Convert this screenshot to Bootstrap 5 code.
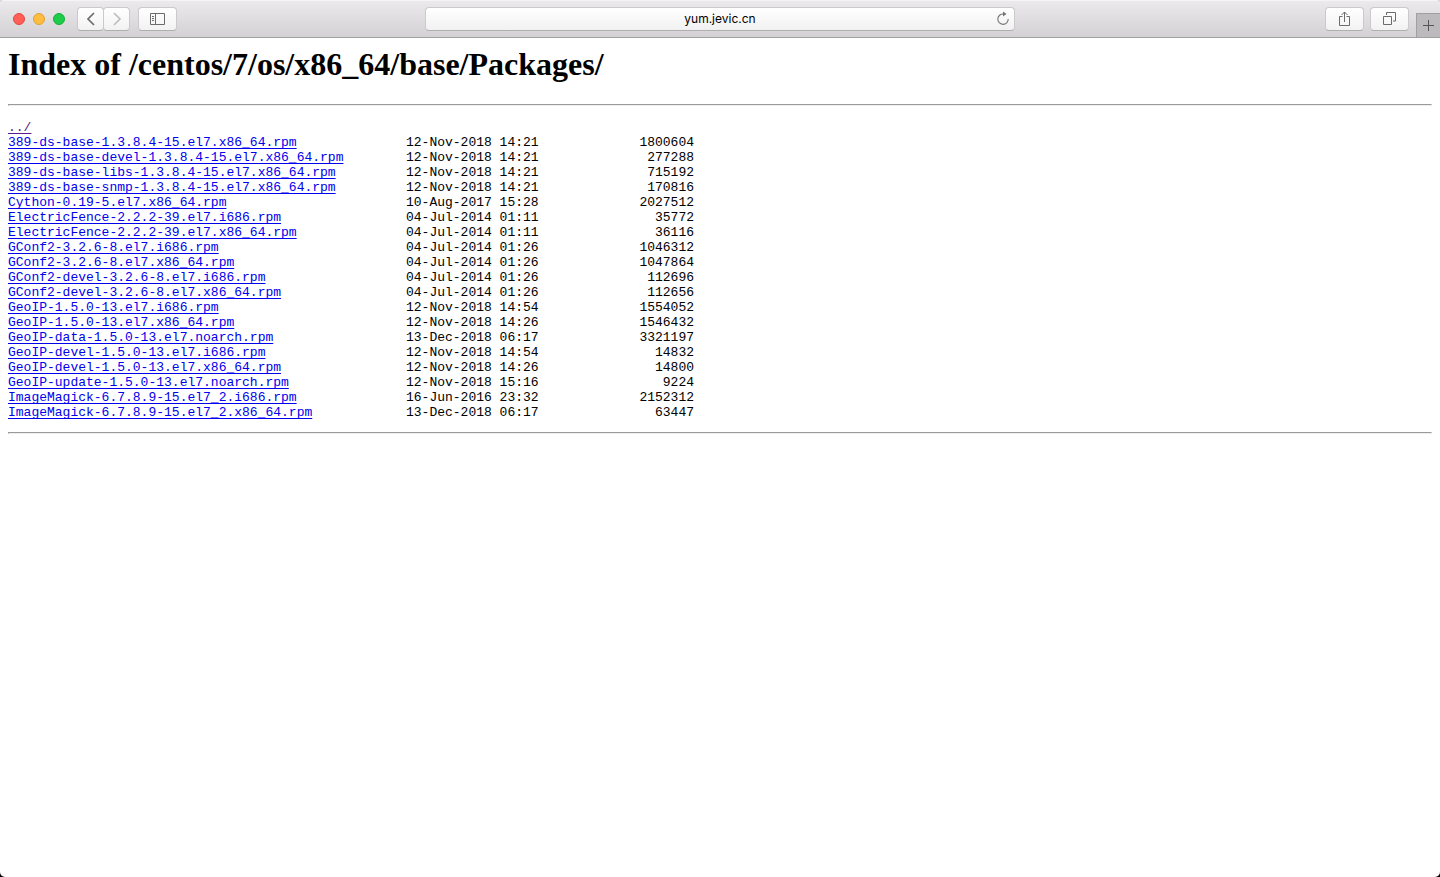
<!DOCTYPE html>
<html lang="en">
<head>
<meta charset="utf-8">
<meta name="viewport" content="width=device-width, initial-scale=1">
<title>Index of /centos/7/os/x86_64/base/Packages/</title>
<link href="https://cdn.jsdelivr.net/npm/bootstrap@5.3.0/dist/css/bootstrap.min.css" rel="stylesheet">
<style>
  body { background: linear-gradient(#d9dcd9 50%, #000 50%); color: #000; }
  .browser { background: #fff; border-radius: 5px; overflow: hidden; }
  .toolbar { height: 38px; background: linear-gradient(#eceaec, #d3d1d3); border-bottom: 1px solid #a1a0a1; box-shadow: inset 0 1px #f6f5f6; }
  .toolbar-side { flex: 1 1 0; }
  .lights { padding: 0 12px 0 13px; }
  .light { width: 12px; height: 12px; border: 1px solid; border-radius: 50%; padding: 0; }
  .light-close { background: #ff5f57; border-color: #e2463f; }
  .light-min { background: #ffbd3f; border-color: #dfa033; }
  .light-zoom { background: #1fcb4b; border-color: #17ac35; }
  .tool { --bs-btn-padding-x: 0; --bs-btn-padding-y: 0; height: 24px; border: 1px solid #cbc9cb; border-bottom-color: #b0aeb0; border-radius: 4px; background: linear-gradient(#fff, #f2f2f2); color: #6b6b6b; display: flex; align-items: center; justify-content: center; }
  .tool-nav { width: 27px; }
  .tool-nav + .tool-nav { margin-left: -1px; color: #bdbdbd; }
  .tool-wide { width: 39px; }
  .tool-group { gap: 6px; margin-right: 7px; }
  .address { width: 590px; }
  .address input { height: 24px; padding: 0 24px; border: 1px solid #cbc9cb; border-bottom-color: #b0aeb0; border-radius: 4px; background: linear-gradient(#fff, #f1f1f1); color: #000; font: 12px/22px Inter, sans-serif; }
  .reload { right: 4px; top: 4px; width: 16px; height: 16px; color: #747474; }
  .new-tab { width: 24px; height: 24px; background: #bcbabc; border: solid #a1a0a1; border-width: 1px 0 0 1px; color: #555; }
  svg { display: block; fill: none; stroke: currentColor; }
  .listing-title { font: bold 32px/36px "Liberation Serif", serif; }
  .rule { height: 2px; margin: 22px 0 14px; border: 1px solid; border-color: #9a9a9a #eee #eee #9a9a9a; opacity: 1; }
  .rule-end { margin-top: 12px; }
  .listing { width: 686px; table-layout: fixed; font: 13px/15px "Liberation Mono", monospace; }
  .listing td { padding: 0; white-space: nowrap; }
  .col-name { width: 398px; }
  .col-date { width: 132px; }
  .listing a { color: #0000ee; text-decoration-skip-ink: none; text-underline-offset: 2px; }
  .listing a.visited { color: #551a8b; }
</style>
</head>
<body>
<div class="browser min-vh-100">
  <header class="toolbar d-flex align-items-center">
    <div class="toolbar-side d-flex align-items-center">
      <div class="lights d-flex gap-2">
        <button class="light light-close" aria-label="Close"></button>
        <button class="light light-min" aria-label="Minimize"></button>
        <button class="light light-zoom" aria-label="Zoom"></button>
      </div>
      <div class="d-flex me-2">
        <button class="btn tool tool-nav" aria-label="Back"><svg width="10" height="14" stroke-width="1.7"><path d="M8 1 2 7l6 6"/></svg></button>
        <button class="btn tool tool-nav" aria-label="Forward"><svg width="10" height="14" stroke-width="1.7"><path d="m2 1 6 6-6 6"/></svg></button>
      </div>
      <button class="btn tool tool-wide" aria-label="Show sidebar"><svg width="15" height="12"><path d="M.5.5h14v11H.5zM5.500.5v11M2 3.500h2M2 5.500h2M2 7.500h2"/></svg></button>
    </div>
    <div class="address position-relative">
      <input class="form-control text-center" type="text" value="yum.jevic.cn" aria-label="Address">
      <button class="reload btn p-0 border-0 position-absolute" aria-label="Reload"><svg width="16" height="16" viewBox="0 0 16 16" stroke-width="1.1"><path d="M8.500 3A5.200 5.200 0 1 0 13.200 8"/><path d="M8 .5v5L11.500 3z" fill="currentColor" stroke="none"/></svg></button>
    </div>
    <div class="toolbar-side d-flex align-items-center justify-content-end align-self-stretch">
      <div class="tool-group d-flex">
        <button class="btn tool tool-wide" aria-label="Share"><svg width="13" height="16"><path d="M4.500 5.500h-3v9h10v-9h-3M6.500 11V1M3.500 4l3-3 3 3"/></svg></button>
        <button class="btn tool tool-wide" aria-label="Show all tabs"><svg width="13" height="13"><path d="M.5 4.500h8v8h-8zM3.500 3V.500h9v8.500h-2.500"/></svg></button>
      </div>
      <button class="new-tab p-0 d-flex align-items-center justify-content-center align-self-end" aria-label="New tab"><svg width="11" height="11"><path d="M5.500 0v11M0 5.500h11"/></svg></button>
    </div>
  </header>
  <main class="px-2 pt-2">
    <h1 class="listing-title mb-0">Index of /centos/7/os/x86_64/base/Packages/</h1>
    <hr class="rule">
    <table class="listing">
      <colgroup><col class="col-name"><col class="col-date"><col></colgroup>
      <tbody>
        <tr><td><a class="visited" href="#">../</a></td><td></td><td></td></tr>
        <tr><td><a href="#">389-ds-base-1.3.8.4-15.el7.x86_64.rpm</a></td><td>12-Nov-2018 14:21</td><td class="text-end">1800604</td></tr>
        <tr><td><a href="#">389-ds-base-devel-1.3.8.4-15.el7.x86_64.rpm</a></td><td>12-Nov-2018 14:21</td><td class="text-end">277288</td></tr>
        <tr><td><a href="#">389-ds-base-libs-1.3.8.4-15.el7.x86_64.rpm</a></td><td>12-Nov-2018 14:21</td><td class="text-end">715192</td></tr>
        <tr><td><a href="#">389-ds-base-snmp-1.3.8.4-15.el7.x86_64.rpm</a></td><td>12-Nov-2018 14:21</td><td class="text-end">170816</td></tr>
        <tr><td><a href="#">Cython-0.19-5.el7.x86_64.rpm</a></td><td>10-Aug-2017 15:28</td><td class="text-end">2027512</td></tr>
        <tr><td><a href="#">ElectricFence-2.2.2-39.el7.i686.rpm</a></td><td>04-Jul-2014 01:11</td><td class="text-end">35772</td></tr>
        <tr><td><a href="#">ElectricFence-2.2.2-39.el7.x86_64.rpm</a></td><td>04-Jul-2014 01:11</td><td class="text-end">36116</td></tr>
        <tr><td><a href="#">GConf2-3.2.6-8.el7.i686.rpm</a></td><td>04-Jul-2014 01:26</td><td class="text-end">1046312</td></tr>
        <tr><td><a href="#">GConf2-3.2.6-8.el7.x86_64.rpm</a></td><td>04-Jul-2014 01:26</td><td class="text-end">1047864</td></tr>
        <tr><td><a href="#">GConf2-devel-3.2.6-8.el7.i686.rpm</a></td><td>04-Jul-2014 01:26</td><td class="text-end">112696</td></tr>
        <tr><td><a href="#">GConf2-devel-3.2.6-8.el7.x86_64.rpm</a></td><td>04-Jul-2014 01:26</td><td class="text-end">112656</td></tr>
        <tr><td><a href="#">GeoIP-1.5.0-13.el7.i686.rpm</a></td><td>12-Nov-2018 14:54</td><td class="text-end">1554052</td></tr>
        <tr><td><a href="#">GeoIP-1.5.0-13.el7.x86_64.rpm</a></td><td>12-Nov-2018 14:26</td><td class="text-end">1546432</td></tr>
        <tr><td><a href="#">GeoIP-data-1.5.0-13.el7.noarch.rpm</a></td><td>13-Dec-2018 06:17</td><td class="text-end">3321197</td></tr>
        <tr><td><a href="#">GeoIP-devel-1.5.0-13.el7.i686.rpm</a></td><td>12-Nov-2018 14:54</td><td class="text-end">14832</td></tr>
        <tr><td><a href="#">GeoIP-devel-1.5.0-13.el7.x86_64.rpm</a></td><td>12-Nov-2018 14:26</td><td class="text-end">14800</td></tr>
        <tr><td><a href="#">GeoIP-update-1.5.0-13.el7.noarch.rpm</a></td><td>12-Nov-2018 15:16</td><td class="text-end">9224</td></tr>
        <tr><td><a href="#">ImageMagick-6.7.8.9-15.el7_2.i686.rpm</a></td><td>16-Jun-2016 23:32</td><td class="text-end">2152312</td></tr>
        <tr><td><a href="#">ImageMagick-6.7.8.9-15.el7_2.x86_64.rpm</a></td><td>13-Dec-2018 06:17</td><td class="text-end">63447</td></tr>
      </tbody>
    </table>
    <hr class="rule rule-end">
  </main>
</div>
<script src="https://cdn.jsdelivr.net/npm/bootstrap@5.3.0/dist/js/bootstrap.bundle.min.js"></script>
</body>
</html>
